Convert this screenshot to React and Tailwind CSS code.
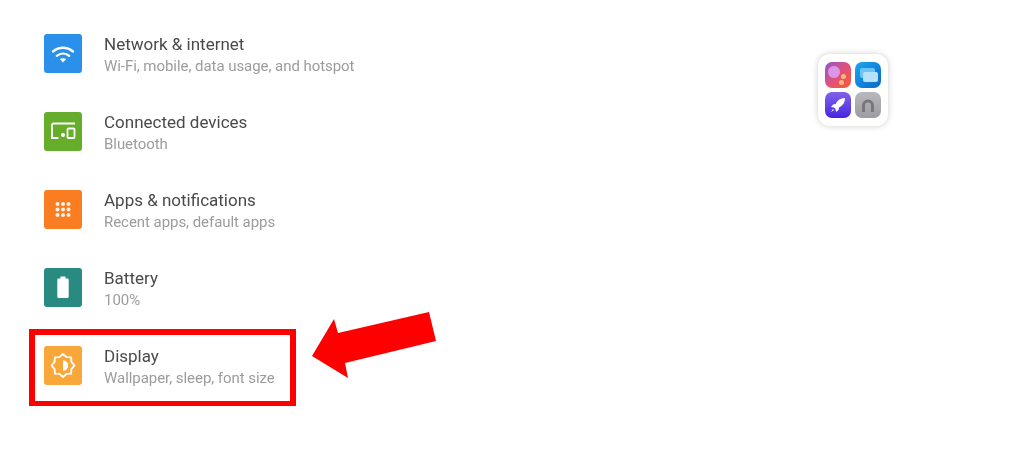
const F = { fontFamily: "Roboto, sans-serif" };

function Wifi() {
  return (
    <svg width="38" height="39" viewBox="0 0 38 39" fill="none" stroke="#fff" strokeLinecap="round" strokeWidth="2.3">
      <path d="M9 17.500C15 12.500 23 12.500 29 17.500" />
      <path d="M12.800 21.800C16.500 18.800 21.500 18.800 25.200 21.800" />
      <path d="M19 28.500l-3.200-3.400c1.900-1.300 4.500-1.300 6.400 0z" fill="#fff" stroke="none" />
    </svg>
  );
}

function Devices() {
  return (
    <svg width="38" height="39" viewBox="0 0 38 39" fill="none" stroke="#fff" strokeWidth="1.800">
      <path d="M31 11.500H9.500a1.500 1.500 0 0 0-1.500 1.500v13h6.500" />
      <rect x="23.500" y="16.500" width="7" height="9.500" rx="1" />
      <circle cx="19" cy="23" r="2" fill="#fff" stroke="none" />
    </svg>
  );
}

function Grid() {
  const pts = [13.5, 19, 24.5];
  return (
    <svg width="38" height="39" viewBox="0 0 38 39" fill="#fff" fillOpacity="0.9">
      {pts.map((y) => pts.map((x) => <circle key={`${x}-${y}`} cx={x} cy={y + 0.5} r="2" />))}
    </svg>
  );
}

function BatteryIcon() {
  return (
    <svg width="38" height="39" viewBox="0 0 38 39" fill="#fff">
      <path d="M16.500 8.500h5v2h2a1.200 1.200 0 0 1 1.200 1.200v17.100a1.200 1.200 0 0 1-1.200 1.200h-9a1.200 1.200 0 0 1-1.200-1.200V11.700a1.200 1.200 0 0 1 1.200-1.200h2z" />
    </svg>
  );
}

function Brightness() {
  return (
    <svg width="38" height="39" viewBox="0 0 38 39" fill="none" stroke="#fff" strokeWidth="1.900" strokeLinejoin="round">
      <polygon points="19,8 22.600,11.100 27.100,11.400 27.400,15.900 30.500,19.500 27.400,23.100 27.100,27.600 22.600,27.900 19,31 15.400,27.900 10.900,27.600 10.600,23.100 7.500,19.500 10.600,15.900 10.900,11.400 15.400,11.100" />
      <path d="M19 14.300a5.200 5.200 0 0 1 0 10.400z" fill="#fff" stroke="none" />
    </svg>
  );
}

const rows = [
  { title: "Network & internet", sub: "Wi-Fi, mobile, data usage, and hotspot", bg: "bg-[#2a90ea]", icon: <Wifi /> },
  { title: "Connected devices", sub: "Bluetooth", bg: "bg-[#67ad2c]", icon: <Devices /> },
  { title: "Apps & notifications", sub: "Recent apps, default apps", bg: "bg-[#fa7d21]", icon: <Grid /> },
  { title: "Battery", sub: "100%", bg: "bg-[#288a80]", icon: <BatteryIcon /> },
  { title: "Display", sub: "Wallpaper, sleep, font size", bg: "bg-[#f9a63a]", icon: <Brightness /> },
];

function Row({ title, sub, bg, icon }) {
  return (
    <div className="flex h-[39px] items-center gap-[22px]">
      <div className={`flex h-[39px] w-[38px] shrink-0 items-center justify-center rounded-[3px] ${bg}`}>{icon}</div>
      <div className="flex flex-col pt-[1px]">
        <div className="text-[17px] leading-[23px] text-[#4a4a4a]">{title}</div>
        <div className="text-[15px] leading-[20px] tracking-[-0.05px] text-[#9c9c9c]">{sub}</div>
      </div>
    </div>
  );
}

function Folder() {
  return (
    <div className="grid h-[72px] w-[70px] grid-cols-[26px_26px] content-center justify-center gap-x-[4px] gap-y-[4px] rounded-[12px] bg-white shadow-[0_0_6px_rgba(0,0,0,0.2)] blur-[0.7px]">
      <div className="relative h-[26px] w-[26px] overflow-hidden rounded-[7px] bg-gradient-to-br from-[#8e4fd0] via-[#e0507a] to-[#fb5a16]">
        <div className="absolute left-[3px] top-[4px] h-[12px] w-[12px] rounded-full bg-[#dc96e6]" />
        <div className="absolute left-[16px] top-[12px] h-[5px] w-[5px] rounded-full bg-[#f8b878]" />
        <div className="absolute left-[14px] top-[18px] h-[5px] w-[5px] rounded-full bg-[#f8b878]" />
      </div>
      <div className="relative h-[26px] w-[26px] overflow-hidden rounded-[7px] bg-gradient-to-br from-[#1ea7ee] to-[#0d66c8]">
        <div className="absolute left-[5px] top-[6px] h-[10px] w-[15px] rounded-[2px] bg-[#6cc3f3]" />
        <div className="absolute left-[8px] top-[10px] h-[10px] w-[15px] rounded-[2px] bg-[#b5e2fa]" />
      </div>
      <div className="flex h-[26px] w-[26px] items-center justify-center rounded-[7px] bg-gradient-to-b from-[#8360ea] to-[#4a1fe0]">
        <svg width="18" height="18" viewBox="0 0 18 18" fill="#fff">
          <path d="M16 2c-4.500 0-7.500 2-9.500 6L4 8.500l-2 2.500 3 .5 1.500 1.500.5 3 2.500-2 .5-2.500c4-2 6-5 6-9.500z" />
          <path d="M4 13l-2 3 3-2z" />
        </svg>
      </div>
      <div className="flex h-[26px] w-[26px] items-center justify-center rounded-[7px] bg-gradient-to-b from-[#b9b9bd] to-[#9b9ba2]">
        <svg width="16" height="16" viewBox="0 0 16 16" fill="none" stroke="#77777e" strokeWidth="3">
          <path d="M3.500 15V8.500a4.500 4.500 0 0 1 9 0V15" />
        </svg>
      </div>
    </div>
  );
}

export default function App() {
  return (
    <div className="relative h-[452px] w-full overflow-hidden bg-white" style={F}>
      <div className="flex items-start justify-between pl-[44px] pr-[136px] pt-[34px]">
        <div className="flex flex-col gap-[39px] blur-[0.5px]">
          {rows.map((r) => (
            <Row key={r.title} {...r} />
          ))}
        </div>
        <div className="mt-[20px]">
          <Folder />
        </div>
      </div>
      <div className="absolute left-[29px] top-[329px] h-[77px] w-[267px] border-x-[6px] border-b-[5px] border-t-[6px] border-[#ff0000]" />
      <svg className="absolute left-[300px] top-[305px]" width="145" height="80" viewBox="300 305 145 80">
        <polygon points="312,356 334,319 338,333 429,312 436,341 345,363 348,378" fill="#ff0000" />
      </svg>
    </div>
  );
}
